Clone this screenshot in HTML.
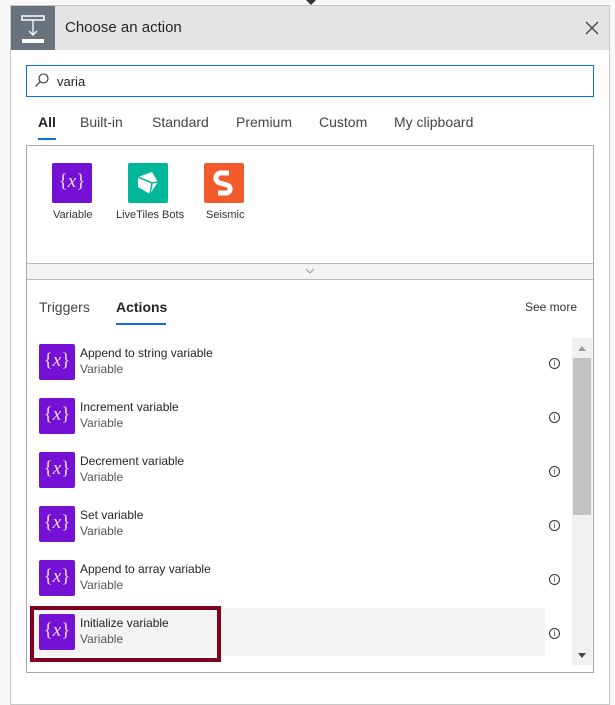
<!DOCTYPE html>
<html><head><style>
*{box-sizing:border-box;margin:0;padding:0}
body{width:615px;height:687px;background:#f8f8f8;font-family:"Segoe UI","Liberation Sans",sans-serif;position:relative;overflow:hidden;color:#323130}
.a{position:absolute}
.dlg{left:10px;top:5px;width:600px;height:700px;background:#fff;border:1px solid #c8c8c8}
.hdr{left:11px;top:6px;width:598px;height:44px;background:#e4e4e4}
.hicon{left:11px;top:6px;width:44px;height:44px;background:#69737d}
.vx{width:36px;height:36px;background:#7411d4;border-radius:2px;color:#e8dcf8;font-family:"Liberation Serif",serif;font-size:19px;text-align:center;line-height:34px;font-style:normal}
.vx i{font-style:italic}
.t{font-size:12px;color:#252525}
.s{font-size:12px;color:#555}
.info{width:11px;height:11px;border:1px solid #333;border-radius:50%;font-size:8px;line-height:9px;text-align:center;color:#333;font-family:"Liberation Sans",sans-serif}
</style></head><body>
<div class="a" style="left:306px;top:0;width:0;height:0;border-left:5px solid transparent;border-right:5px solid transparent;border-top:5px solid #333"></div>
<div class="a dlg"></div>
<div class="a hdr"></div>
<div class="a hicon"><svg width="44" height="44"><rect x="11" y="10" width="22" height="4" fill="none" stroke="#fff" stroke-width="1.5"/><rect x="11" y="33" width="22" height="4" fill="#fff"/><path d="M22 14V29M18 25l4 4 4-4" stroke="#fff" stroke-width="1.3" fill="none"/></svg></div>
<div class="a" style="left:65px;top:19px;font-size:15px;color:#252525">Choose an action</div>
<svg class="a" style="left:585px;top:21px" width="14" height="14"><path d="M1 1L13 13M13 1L1 13" stroke="#444" stroke-width="1.3"/></svg>
<div class="a" style="left:26px;top:65px;width:568px;height:32px;border:1px solid #0f6cef"></div>
<svg class="a" style="left:34px;top:72px" width="16" height="16"><circle cx="9.5" cy="6.5" r="4.5" fill="none" stroke="#333" stroke-width="1.1"/><path d="M6.3 9.7L1.5 14.5" stroke="#333" stroke-width="1.2"/></svg>
<div class="a" style="left:57px;top:74px;font-size:13px;color:#252525">varia</div>
<div class="a" style="left:38px;top:114px;font-size:14px;font-weight:600;color:#252525">All</div>
<div class="a" style="left:38px;top:138px;width:18px;height:2px;background:#0f6cef"></div>
<div class="a" style="left:80px;top:114px;font-size:14px;color:#444">Built-in</div>
<div class="a" style="left:152px;top:114px;font-size:14px;color:#444">Standard</div>
<div class="a" style="left:236px;top:114px;font-size:14px;color:#444">Premium</div>
<div class="a" style="left:319px;top:114px;font-size:14px;color:#444">Custom</div>
<div class="a" style="left:394px;top:114px;font-size:14px;color:#444">My clipboard</div>
<div class="a" style="left:26px;top:145px;width:568px;height:528px;border:1px solid #a8a8a8"></div>
<div class="a vx" style="left:52px;top:163px;width:40px;height:40px;line-height:38px">{<i>x</i>}</div>
<div class="a" style="left:128px;top:163px;width:40px;height:40px;background:#00b899;border-radius:2px"><svg width="40" height="40"><path d="M10 14L24 9l6 10-8 12-12-7z" fill="#fff"/><path d="M10 14l14 6 6-1M24 20l-2 11" stroke="#00b899" stroke-width="1.5" fill="none"/></svg></div>
<div class="a" style="left:204px;top:163px;width:40px;height:40px;background:#f15a2b;border-radius:2px"><svg width="40" height="40"><path d="M25 10h-7a5 5 0 0 0-2 10l7 2a4 4 0 0 1-2 8h-7" stroke="#fff" stroke-width="5" fill="none"/></svg></div>
<div class="a s" style="left:53px;top:209px;font-size:11px;color:#333">Variable</div>
<div class="a s" style="left:116px;top:209px;font-size:11px;color:#333">LiveTiles Bots</div>
<div class="a s" style="left:206px;top:209px;font-size:11px;color:#333">Seismic</div>
<div class="a" style="left:27px;top:263px;width:566px;height:17px;background:#f3f3f3;border-top:1px solid #bbb;border-bottom:1px solid #bbb"></div>
<svg class="a" style="left:305px;top:268px" width="10" height="6"><path d="M1 1l4 4 4-4" stroke="#999" fill="none"/></svg>
<div class="a" style="left:39px;top:299px;font-size:14px;color:#444">Triggers</div>
<div class="a" style="left:116px;top:299px;font-size:14px;font-weight:600;color:#252525">Actions</div>
<div class="a" style="left:116px;top:323px;width:50px;height:2px;background:#0f6cef"></div>
<div class="a" style="left:525px;top:300px;font-size:12px;color:#333">See more</div>
<div class="a" style="left:572px;top:338px;width:20px;height:327px;background:#f0f0f0"></div>
<div class="a" style="left:573px;top:358px;width:18px;height:157px;background:#c2c2c2"></div>
<div class="a" style="left:578px;top:346px;border-left:4px solid transparent;border-right:4px solid transparent;border-bottom:5px solid #999"></div>
<div class="a" style="left:578px;top:653px;border-left:4px solid transparent;border-right:4px solid transparent;border-top:5px solid #444"></div>
<div class="a" style="left:33px;top:608px;width:512px;height:48px;background:#f3f3f3"></div>

<div class="a vx" style="left:39px;top:344px">{<i>x</i>}</div><div class="a t" style="left:80px;top:346px">Append to string variable</div><div class="a s" style="left:80px;top:362px">Variable</div><div class="a info" style="left:549px;top:358px">i</div>
<div class="a vx" style="left:39px;top:398px">{<i>x</i>}</div><div class="a t" style="left:80px;top:400px">Increment variable</div><div class="a s" style="left:80px;top:416px">Variable</div><div class="a info" style="left:549px;top:412px">i</div>
<div class="a vx" style="left:39px;top:452px">{<i>x</i>}</div><div class="a t" style="left:80px;top:454px">Decrement variable</div><div class="a s" style="left:80px;top:470px">Variable</div><div class="a info" style="left:549px;top:466px">i</div>
<div class="a vx" style="left:39px;top:506px">{<i>x</i>}</div><div class="a t" style="left:80px;top:508px">Set variable</div><div class="a s" style="left:80px;top:524px">Variable</div><div class="a info" style="left:549px;top:520px">i</div>
<div class="a vx" style="left:39px;top:560px">{<i>x</i>}</div><div class="a t" style="left:80px;top:562px">Append to array variable</div><div class="a s" style="left:80px;top:578px">Variable</div><div class="a info" style="left:549px;top:574px">i</div>
<div class="a vx" style="left:39px;top:614px">{<i>x</i>}</div><div class="a t" style="left:80px;top:616px">Initialize variable</div><div class="a s" style="left:80px;top:632px">Variable</div><div class="a info" style="left:549px;top:628px">i</div>
<div class="a" style="left:30px;top:606px;width:191px;height:56px;border:4px solid #800020"></div>
</body></html>
